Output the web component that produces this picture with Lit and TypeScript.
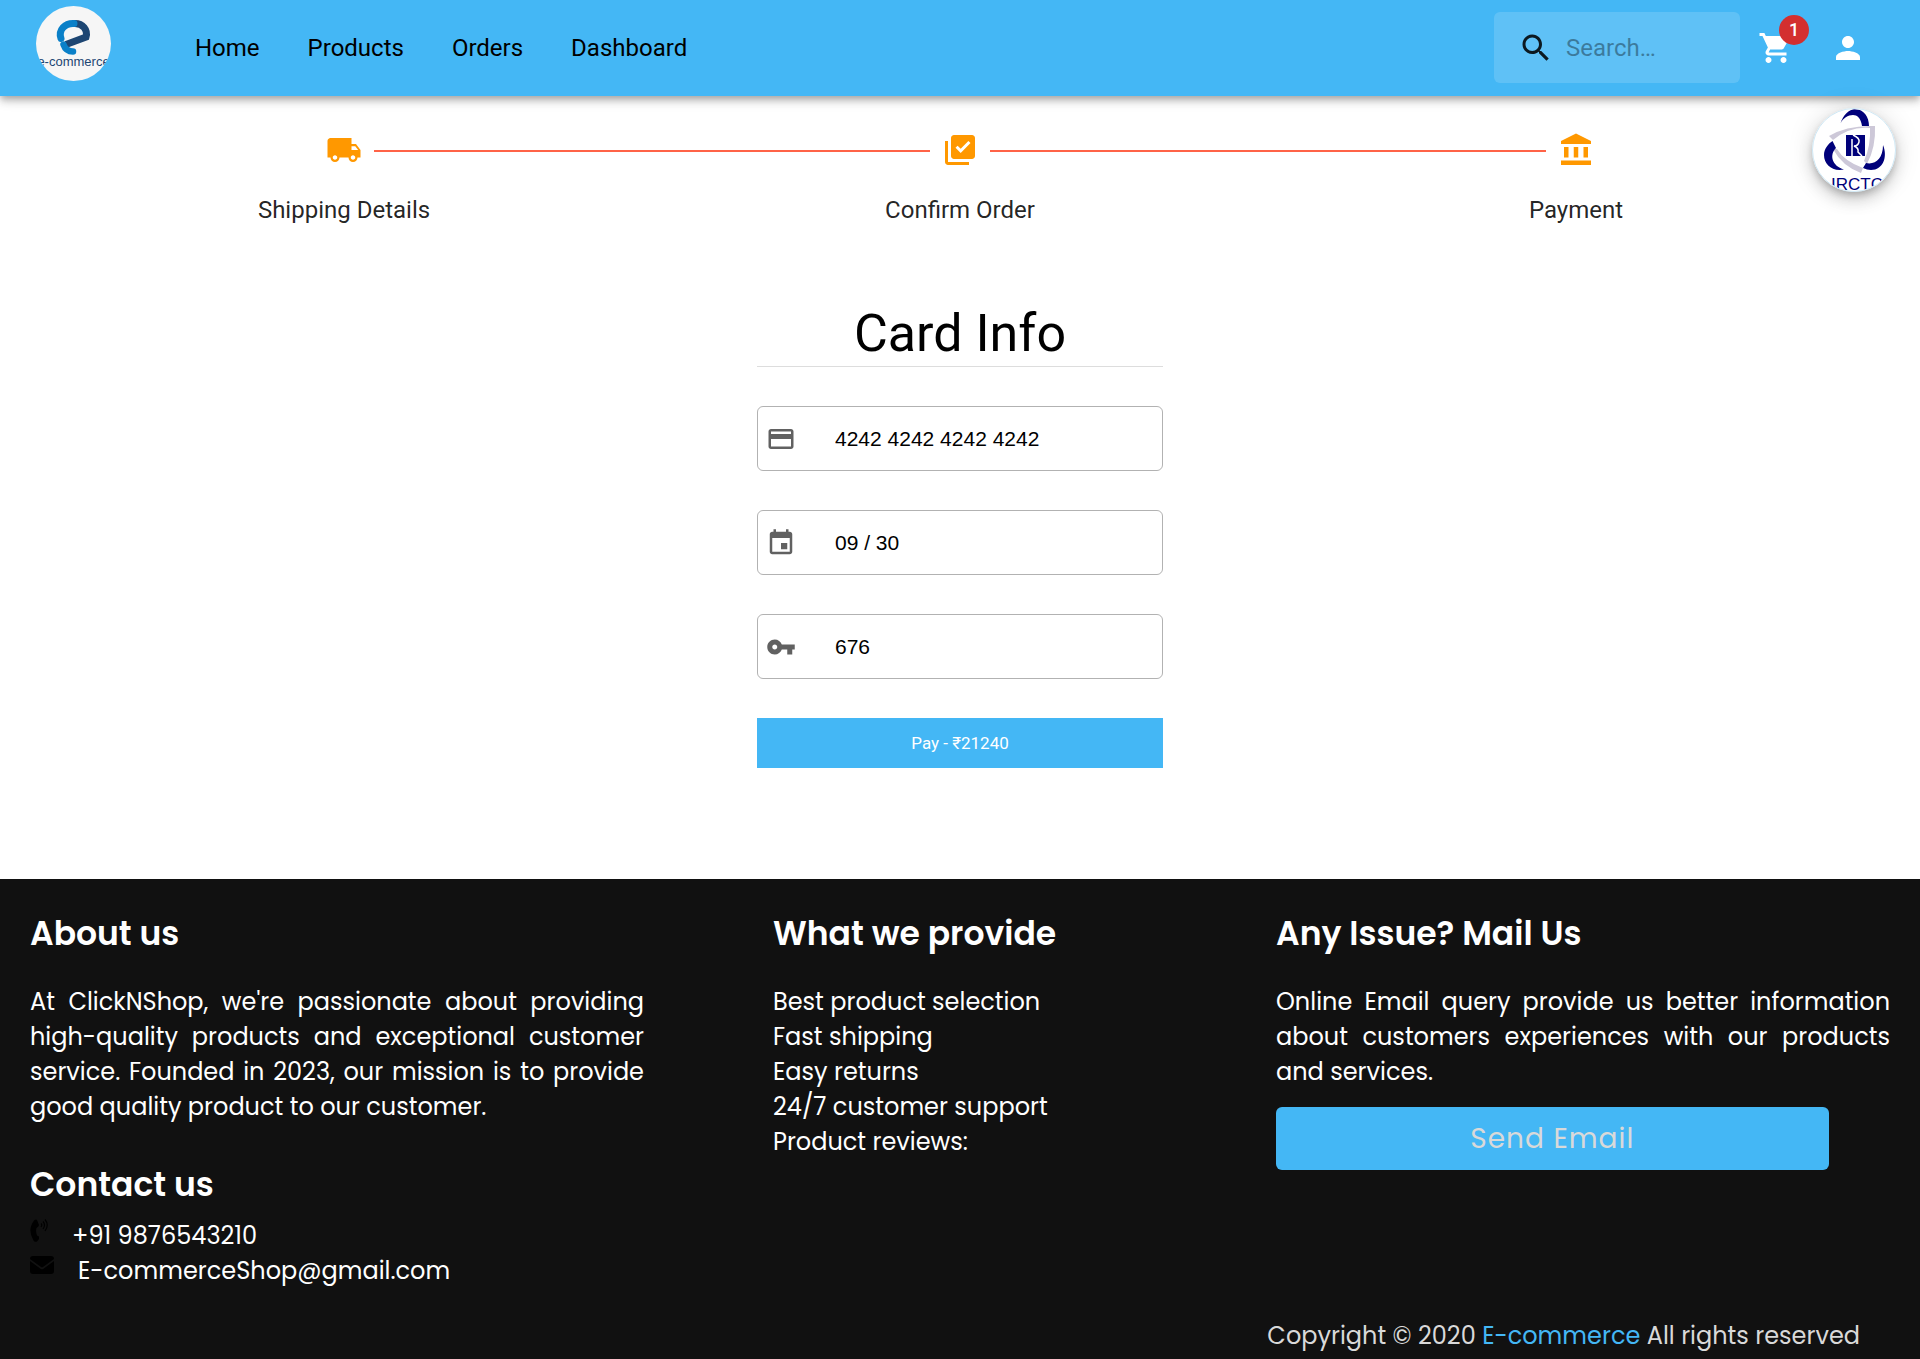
import { LitElement, html, css } from "lit";
import { customElement } from "lit/decorators.js";

const icon = (d: string, size = "i30") =>
  html`<svg class="icon ${size}" viewBox="0 0 24 24" aria-hidden="true"><path d=${d}></path></svg>`;

const ICONS = {
  search: "M15.5 14h-.79l-.28-.27C15.41 12.59 16 11.11 16 9.5 16 5.91 13.09 3 9.5 3S3 5.91 3 9.5 5.91 16 9.5 16c1.61 0 3.09-.59 4.23-1.57l.27.28v.79l5 4.99L20.49 19l-4.99-5zm-6 0C7.01 14 5 11.99 5 9.5S7.01 5 9.5 5 14 7.01 14 9.5 11.99 14 9.5 14z",
  cart: "M7 18c-1.1 0-1.99.9-1.99 2S5.9 22 7 22s2-.9 2-2-.9-2-2-2zM1 2v2h2l3.6 7.59-1.35 2.45c-.16.28-.25.61-.25.96 0 1.1.9 2 2 2h12v-2H7.42c-.14 0-.25-.11-.25-.25l.03-.12.9-1.63h7.45c.75 0 1.41-.41 1.75-1.03l3.58-6.49c.08-.14.12-.31.12-.48 0-.55-.45-1-1-1H5.21l-.94-2H1zm16 16c-1.1 0-1.99.9-1.99 2s.89 2 1.99 2 2-.9 2-2-.9-2-2-2z",
  person: "M12 12c2.21 0 4-1.79 4-4s-1.79-4-4-4-4 1.79-4 4 1.79 4 4 4zm0 2c-2.67 0-8 1.34-8 4v2h16v-2c0-2.66-5.33-4-8-4z",
  truck: "M20 8h-3V4H3c-1.1 0-2 .9-2 2v11h2c0 1.66 1.34 3 3 3s3-1.34 3-3h6c0 1.66 1.34 3 3 3s3-1.34 3-3h2v-5l-3-4zM6 18.5c-.83 0-1.5-.67-1.5-1.5s.67-1.5 1.5-1.5 1.5.67 1.5 1.5-.67 1.5-1.5 1.5zm13.5-9l1.96 2.5H17V9.5h2.5zm-1.5 9c-.83 0-1.5-.67-1.5-1.5s.67-1.5 1.5-1.5 1.5.67 1.5 1.5-.67 1.5-1.5 1.5z",
  check: "M20 2H8c-1.1 0-2 .9-2 2v12c0 1.1.9 2 2 2h12c1.1 0 2-.9 2-2V4c0-1.1-.9-2-2-2zm-7.53 12L9 10.5l1.4-1.41 2.07 2.08L17.6 6 19 7.41 12.47 14zM4 6H2v14c0 1.1.9 2 2 2h14v-2H4V6z",
  bank: "M4 10h3v7H4zM10.5 10h3v7h-3zM2 19h20v3H2zM17 10h3v7h-3zM12 1L2 6v2h20V6z",
  card: "M20 4H4c-1.11 0-1.99.89-1.99 2L2 18c0 1.11.89 2 2 2h16c1.11 0 2-.89 2-2V6c0-1.11-.89-2-2-2zm0 14H4v-6h16v6zm0-10H4V6h16v2z",
  event: "M17 12h-5v5h5v-5zM16 1v2H8V1H6v2H5c-1.11 0-1.99.9-1.99 2L3 19c0 1.1.89 2 2 2h14c1.1 0 2-.9 2-2V5c0-1.1-.9-2-2-2h-1V1h-2zm3 18H5V8h14v11z",
  key: "M12.65 10C11.83 7.67 9.61 6 7 6c-3.31 0-6 2.69-6 6s2.69 6 6 6c2.61 0 4.83-1.67 5.65-4H17v4h4v-4h2v-4H12.65zM7 14c-1.1 0-2-.9-2-2s.9-2 2-2 2 .9 2 2-.9 2-2 2z",
};

const NAV = ["Home", "Products", "Orders", "Dashboard"];
const STEPS = [
  { label: "Shipping Details", icon: ICONS.truck },
  { label: "Confirm Order", icon: ICONS.check },
  { label: "Payment", icon: ICONS.bank },
];
const FIELDS = [
  { id: "number", label: "Card number", value: "4242 4242 4242 4242", icon: ICONS.card },
  { id: "expiry", label: "Expiry date", value: "09 / 30", icon: ICONS.event },
  { id: "cvc", label: "CVC", value: "676", icon: ICONS.key },
];
const SERVICES = ["Best product selection", "Fast shipping", "Easy returns", "24/7 customer support", "Product reviews:"];

@customElement("app-root")
export class AppRoot extends LitElement {
  static styles = css`
    :host { display: block; background: #fff; color: #000; font-family: Roboto, "Noto Sans", sans-serif; }
    *, *::before, *::after { box-sizing: border-box; }
    h1, h2, p, ul, ol { margin: 0; padding: 0; }
    ul, ol { list-style: none; }
    a { color: inherit; text-decoration: none; }
    button { border: 0; padding: 0; background: none; font: inherit; cursor: pointer; }
    .icon { display: block; flex: none; fill: currentColor; }
    .i30 { width: 30px; height: 30px; }
    .i36 { width: 36px; height: 36px; }

    .bar { position: relative; display: flex; align-items: center; height: 96px; padding: 0 54px 1px 36px; background: #44b7f5; box-shadow: 0 3px 6px -1px #0003, 0 6px 8px #0002, 0 1px 15px #0002; }
    .logo { display: block; width: 75px; height: 75px; margin: 0 60px 8px 0; }
    .nav { display: flex; flex: 1; }
    .nav a { padding: 0 24px; font-size: 24px; line-height: 36px; }
    .search { display: flex; align-items: center; gap: 12px; width: 246px; height: 71px; padding: 0 24px; border-radius: 6px; background: #ffffff26; }
    .search input { flex: 1; min-width: 0; border: 0; padding: 0; outline: 0; background: none; color: #000; font: 24px/36px Roboto, sans-serif; }
    .search input::placeholder { color: #000; opacity: 0.36; }
    .search .icon { color: #000000de; }
    .cart { position: relative; margin-left: 18px; color: #fff; }
    .badge { position: absolute; left: 21px; top: -15px; width: 30px; height: 30px; border-radius: 50%; background: #d32f2f; color: #fff; font-size: 18px; font-weight: 500; line-height: 30px; text-align: center; }
    .user { margin-left: 36px; color: #fff; }

    .float { position: absolute; top: 108px; right: 24px; width: 84px; height: 84px; border-radius: 50%; background: #fff; box-shadow: 0 4px 7px -1px #0003, 0 9px 15px #0002, 0 1px 27px #0002; }
    .float svg { display: block; width: 84px; height: 84px; }

    .steps { display: grid; grid-template-columns: repeat(3, 1fr); padding: 36px 36px 0; }
    .step { display: flex; flex-direction: column; gap: 24px; align-items: center; }
    .rail { display: grid; grid-template-columns: 1fr 36px 1fr; gap: 12px; align-items: center; width: 100%; color: #ff9800; }
    .line { height: 2px; margin-top: 2px; background: tomato; }
    .step:first-child .line:first-child, .step:last-child .line:last-child { visibility: hidden; }
    .step span { color: #000000de; font-size: 24px; line-height: 36px; }

    .pay { display: flex; flex-direction: column; gap: 39px; width: 406px; max-width: 100%; margin: 0 auto; padding: 75px 0 111px; }
    .pay h1 { border-bottom: 1px solid #0002; padding-bottom: 1px; font-size: 52px; font-weight: 400; line-height: 62px; text-align: center; }
    .field { display: flex; align-items: center; gap: 39px; height: 65px; padding: 0 8px; border: 1px solid #0000004d; border-radius: 6px; color: #0000009e; }
    .field input { flex: 1; min-width: 0; border: 0; padding: 0; outline: 0; background: none; color: #000; font: 21px/30px "Liberation Sans", Arial, sans-serif; }
    .pay button { height: 50px; background: #44b7f5; color: #fff; font-size: 17px; line-height: 24px; }

    .foot { padding: 34px 30px 6px; background: #111; color: #fff; font-family: Poppins, Inter, "Noto Sans", sans-serif; font-size: 24px; line-height: 35px; }
    .cols { display: grid; grid-template-columns: 614fr 374fr 614fr; column-gap: 129px; }
    .foot h2 { margin-bottom: 29px; font-size: 33px; font-weight: 600; line-height: 42px; }
    .text { text-align: justify; }
    .foot h2.contact { margin: 40px 0 12px; }
    .contacts li { display: flex; gap: 24px; }
    .contacts svg { flex: none; height: 24px; fill: #000; }
    .phone { width: 18px; }
    .mail { width: 24px; }
    .send { display: block; width: 90%; height: 63px; margin-top: 18px; border-radius: 6px; background: #44b7f5; color: #d9d9d9; font-size: 28px; letter-spacing: 1px; }
    .copy { margin-top: 30px; padding-right: 30px; color: #d9d9d9; text-align: right; }
    .copy a { color: #44b7f5; }
  `;

  render() {
    return html`
      <header class="bar">
        <a href="#home" aria-label="E-commerce">
          <svg class="logo" viewBox="0 0 75 75" aria-hidden="true">
            <defs><clipPath id="disc"><circle cx="37.5" cy="37.5" r="37.5"></circle></clipPath></defs>
            <g clip-path="url(#disc)">
              <rect width="75" height="75" fill="#f6f6f6"></rect>
              <path d="M38 17.5C47 17 52 24 50 31L30 38.5" fill="none" stroke="#1d4673" stroke-width="7"></path>
              <path d="M25 32.5C22 24 29 17 38 17.5" fill="none" stroke="#0a80c8" stroke-width="7" stroke-linecap="round"></path>
              <path d="M27.5 38.5C29 43 32 45.5 37 45.5" fill="none" stroke="#0a80c8" stroke-width="6.5" stroke-linecap="round"></path>
              <text x="37.5" y="60" text-anchor="middle" font-family="Liberation Sans" font-size="13" fill="#1d4673">e-commerce</text>
            </g>
          </svg>
        </a>
        <nav class="nav">${NAV.map((n) => html`<a href="#${n.toLowerCase()}">${n}</a>`)}</nav>
        <label class="search">${icon(ICONS.search, "i36")}<input type="search" aria-label="Search" placeholder="Search…" /></label>
        <button class="cart" aria-label="Cart">${icon(ICONS.cart, "i36")}<span class="badge">1</span></button>
        <button class="user" aria-label="Account">${icon(ICONS.person, "i36")}</button>
      </header>

      <button class="float" aria-label="IRCTC">
        <svg viewBox="0 0 84 84" aria-hidden="true">
          <defs><clipPath id="round"><circle cx="42" cy="42" r="41"></circle></clipPath></defs>
          <g clip-path="url(#round)">
            <g fill="#cdc8d8">
              <path d="M17 28Q35 17 63 18L58 20Q38 18 21 32Z"></path>
              <path d="M58 18L63 18Q64 39 55 56L52 53Q59 38 58 18Z"></path>
              <path d="M21 41L25 41Q32 53 51 60L49 65Q30 58 21 41Z"></path>
            </g>
            <g fill="#00007a">
              <path d="M28.5 15.5C31 7 37 1.3 43 1.3C52 1.3 57 9 57 18H50C49 10 45 7 41 7C36 7 31 10 28.5 15.5Z"></path>
              <path d="M20.5 33L24 40C17 47 20 58 32 61.5C20 64 12 56 12 47C12 41 16 36 20.5 33Z"></path>
              <path d="M71 37C76 49 71 62 59 62Q55 62 51 60L54 55C63 57 71 51 71 37Z"></path>
              <rect x="34" y="27" width="19" height="21"></rect>
            </g>
            <path d="M41 27Q48 30 47 34Q46 38 42 38Q47 40 46 44L50 48M40 31V48" fill="none" stroke="#fff" stroke-width="1.5"></path>
            <text x="45" y="82" text-anchor="middle" font-family="Liberation Sans" font-size="17" fill="#00007a">IRCTC</text>
          </g>
          <circle cx="42" cy="42" r="41.5" fill="none" stroke="#cfe8f5"></circle>
        </svg>
      </button>

      <main>
        <ol class="steps">
          ${STEPS.map((s) => html`<li class="step">
            <div class="rail"><i class="line"></i>${icon(s.icon, "i36")}<i class="line"></i></div>
            <span>${s.label}</span>
          </li>`)}
        </ol>
        <form class="pay" @submit=${(e: Event) => e.preventDefault()}>
          <h1>Card Info</h1>
          ${FIELDS.map((f) => html`<label class="field" for=${f.id}>
            ${icon(f.icon)}<input id=${f.id} aria-label=${f.label} .value=${f.value} />
          </label>`)}
          <button type="submit">Pay - ₹21240</button>
        </form>
      </main>

      <footer class="foot">
        <div class="cols">
          <section>
            <h2>About us</h2>
            <p class="text">At ClickNShop, we're passionate about providing high-quality products and exceptional customer service. Founded in 2023, our mission is to provide good quality product to our customer.</p>
            <h2 class="contact">Contact us</h2>
            <ul class="contacts">
              <li>
                <svg class="phone" viewBox="0 0 18 24" aria-hidden="true">
                  <path d="M4 2.5Q6 1 7 2L9 7Q9 8.500 6.500 10Q5.500 14 7 17.500L9 18.500V21L7 23.500Q4.500 24.500 3.500 22.500Q-3 12 4 2.500Z"></path>
                  <path d="M11 5.500Q12.500 7 11 9M13 3.500Q16 7 13 11M15 1.500Q19.500 7 15 13" fill="none" stroke="#000" stroke-width="1.2"></path>
                </svg>
                <a href="tel:+919876543210">+91 9876543210</a>
              </li>
              <li>
                <svg class="mail" viewBox="0 0 24 24" aria-hidden="true">
                  <path d="M3 3H21Q24 3 24 6L13 14Q12 14.7 11 14L0 6Q0 3 3 3ZM0 8L10.5 15.7Q12 16.7 13.5 15.7L24 8V18Q24 21 21 21H3Q0 21 0 18Z"></path>
                </svg>
                <a href="mailto:E-commerceShop@gmail.com">E-commerceShop@gmail.com</a>
              </li>
            </ul>
          </section>
          <section>
            <h2>What we provide</h2>
            <ul>${SERVICES.map((s) => html`<li>${s}</li>`)}</ul>
          </section>
          <section>
            <h2>Any Issue? Mail Us</h2>
            <p class="text">Online Email query provide us better information about customers experiences with our products and services.</p>
            <button class="send">Send Email</button>
          </section>
        </div>
        <p class="copy">Copyright © 2020 <a href="#home">E-commerce</a> All rights reserved</p>
      </footer>
    `;
  }
}
